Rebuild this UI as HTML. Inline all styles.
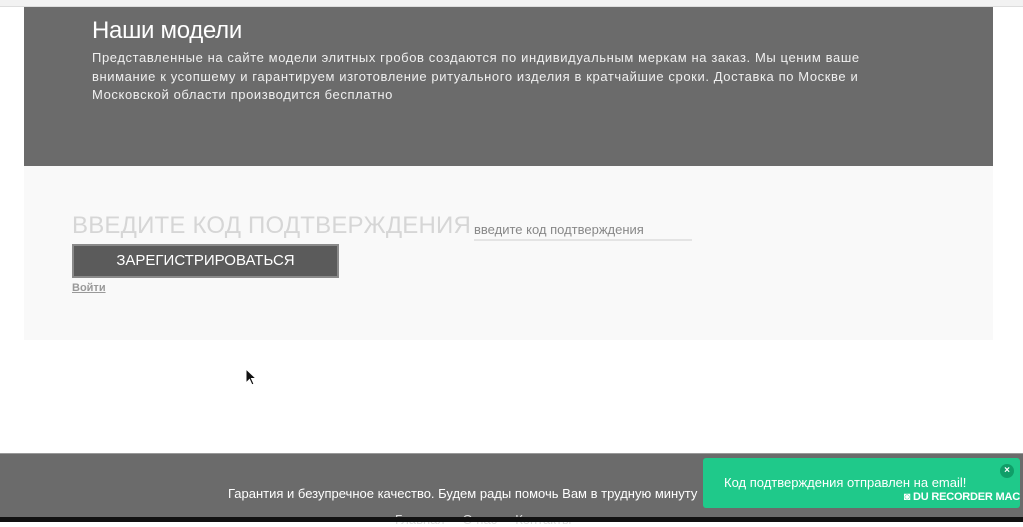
<!DOCTYPE html>
<html><head><meta charset="utf-8"><style>
*{margin:0;padding:0;box-sizing:border-box}
body{width:1023px;height:522px;overflow:hidden;background:#fff;font-family:"Liberation Sans","DejaVu Sans",sans-serif;position:relative}
.top{position:absolute;left:0;top:0;width:1023px;height:7px;background:#f2f2f2;border-bottom:1px solid #ddd}
.hero{position:absolute;left:24px;top:7px;width:969px;height:159px;background:#6b6b6b;color:#fff}
.hero h1{position:absolute;left:68px;top:10px;font-weight:normal;font-size:24px;letter-spacing:-0.3px}
.hero p{position:absolute;left:68px;top:42px;white-space:nowrap;font-size:13px;line-height:18.5px;color:#f0f0f0;letter-spacing:0.6px}
.form{position:absolute;left:24px;top:166px;width:969px;height:174px;background:#f9f9f9}
.big{position:absolute;left:48px;top:46px;font-size:24px;color:#d6d6d6;letter-spacing:0.2px}
.inp{position:absolute;left:450px;top:56px;width:218px;font-size:13px;color:#888;border-bottom:2px solid #e4e4e4;padding-bottom:2px}
.btn{position:absolute;left:48px;top:78px;width:267px;height:34px;background:#5b5b5b;border:2px solid #8a8a8a;color:#fff;font-size:15px;text-align:center;line-height:30px}
.link{position:absolute;left:48px;top:116px;font-size:11px;color:#999;font-weight:bold;text-decoration:underline}
.foot{position:absolute;left:0;top:453px;width:1023px;height:64px;background:#6b6b6b;border-top:1px solid #999}
.foot .t{position:absolute;left:228px;top:32px;font-size:13px;color:#fff}
.foot .n{position:absolute;left:395px;top:58px;font-size:13px;color:#ddd}
.bar{position:absolute;left:0;top:517px;width:1023px;height:5px;background:#111}
.toast{position:absolute;left:703px;top:458px;width:317px;height:50px;background:#1fc98a;border-radius:3px;color:#fff}
.toast .m{position:absolute;left:21px;top:17px;font-size:13px}
.toast .x{position:absolute;right:6px;top:6px;width:14px;height:14px;border-radius:50%;background:#0f9e68;font-size:10px;text-align:center;line-height:14px;font-weight:bold}
.toast .r{position:absolute;right:0;top:33px;font-size:11px;font-weight:bold;letter-spacing:-0.2px}
</style></head><body>
<div class="top"></div>
<div class="hero"><h1>Наши модели</h1><p>Представленные на сайте модели элитных гробов создаются по индивидуальным меркам на заказ. Мы ценим ваше<br>внимание к усопшему и гарантируем изготовление ритуального изделия в кратчайшие сроки. Доставка по Москве и<br>Московской области производится бесплатно</p></div>
<div class="form"><div class="big">ВВЕДИТЕ КОД ПОДТВЕРЖДЕНИЯ</div><div class="inp">введите код подтверждения</div><div class="btn">ЗАРЕГИСТРИРОВАТЬСЯ</div><div class="link">Войти</div></div>
<div class="foot"><div class="t">Гарантия и безупречное качество. Будем рады помочь Вам в трудную минуту</div><div class="n">Главная &nbsp;&nbsp;&nbsp; О нас &nbsp;&nbsp;&nbsp; Контакты</div></div>
<div class="bar"></div>
<div class="toast"><div class="m">Код подтверждения отправлен на email!</div><div class="x">×</div><div class="r">◙ DU RECORDER MAC</div></div>
<svg style="position:absolute;left:245px;top:368px" width="12" height="20"><path d="M1 1 L1 15 L4.5 11.5 L7 17 L9 16 L6.5 10.5 L11 10.5 Z" fill="#111" stroke="#fff" stroke-width="1"/></svg>
</body></html>
